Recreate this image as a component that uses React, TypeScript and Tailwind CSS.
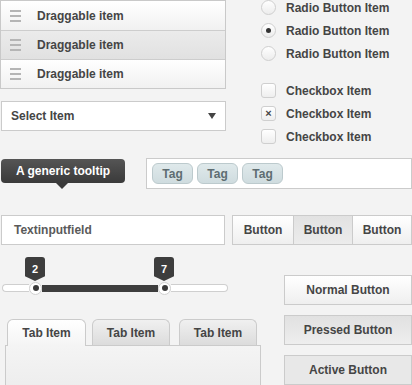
import React from 'react';

const font = { fontFamily: '"Liberation Sans", Arial, sans-serif' };

function Handle() {
  return (
    <div className="flex w-[11px] flex-col gap-[3px]">
      <span className="h-[2px] bg-[#b5b5b5]" />
      <span className="h-[2px] bg-[#b5b5b5]" />
      <span className="h-[2px] bg-[#b5b5b5]" />
    </div>
  );
}

const dragItems = [false, true, false];

function Radio({ checked }: { checked?: boolean }) {
  return (
    <span className="flex h-[15px] w-[15px] items-center justify-center rounded-full border border-[#cfcfcf] bg-gradient-to-b from-[#ffffff] to-[#ececec]">
      {checked && <span className="h-[5px] w-[5px] rounded-full bg-[#333]" />}
    </span>
  );
}

function Check({ checked }: { checked?: boolean }) {
  return (
    <span className="flex h-[15px] w-[15px] items-center justify-center rounded-[3px] border border-[#cfcfcf] bg-gradient-to-b from-[#ffffff] to-[#eeeeee] text-[11px] leading-none text-[#444]">
      {checked && '×'}
    </span>
  );
}

function Bubble({ n }: { n: number }) {
  return (
    <div className="flex h-[24px] w-[20px] items-start justify-center rounded-t-[3px] bg-[#3d3d3d] pt-[4px] text-[11px] font-bold text-white [clip-path:polygon(0_0,100%_0,100%_80%,50%_100%,0_80%)]">
      {n}
    </div>
  );
}

function Knob() {
  return (
    <span className="flex h-[13px] w-[13px] items-center justify-center rounded-full border border-[#d0d0d0] bg-white">
      <span className="h-[6px] w-[6px] rounded-full bg-[#3a3a3a]" />
    </span>
  );
}

export default function App() {
  return (
    <div className="h-[385px] w-[412px] overflow-hidden bg-[#f3f3f3] text-[12px] font-bold text-[#454545]" style={font}>
      {/* row 1 */}
      <div className="flex">
        <div className="w-[226px]">
          <div className="border border-[#c9c9c9]">
            {dragItems.map((dark, i) => (
              <div
                key={i}
                className={
                  'flex h-[29px] items-center gap-[16px] pl-[9px] ' +
                  (i > 0 ? 'border-t border-[#cdcdcd] ' : '') +
                  (dark ? 'bg-gradient-to-b from-[#ebebeb] to-[#e1e1e1]' : 'bg-gradient-to-b from-[#ffffff] to-[#f1f1f1]')
                }
              >
                <Handle />
                <span>Draggable item</span>
              </div>
            ))}
          </div>
          <div className="mt-[12px] ml-[1px] flex h-[30px] items-center justify-between border border-[#cbcbcb] bg-white px-[9px]">
            <span>Select Item</span>
            <span className="h-0 w-0 border-x-[4px] border-t-[6px] border-x-transparent border-t-[#444]" />
          </div>
        </div>
        <div className="ml-[35px] flex flex-col gap-[8px]">
          {[false, true, false].map((c, i) => (
            <div key={i} className="flex h-[15px] items-center gap-[10px]">
              <Radio checked={c} />
              <span>Radio Button Item</span>
            </div>
          ))}
          <div className="h-[6px]" />
          {[false, true, false].map((c, i) => (
            <div key={i} className="flex h-[15px] items-center gap-[10px]">
              <Check checked={c} />
              <span>Checkbox Item</span>
            </div>
          ))}
        </div>
      </div>

      {/* row 2 */}
      <div className="mt-[14px] flex items-start">
        <div className="relative mt-[1px] ml-[1px] flex h-[24px] w-[124px] items-center justify-center rounded-[4px] bg-gradient-to-b from-[#555] to-[#3a3a3a] text-[12px] text-white">
          A generic tooltip
          <span className="absolute top-[24px] left-[55px] h-0 w-0 border-x-[6px] border-t-[6px] border-x-transparent border-t-[#3a3a3a]" />
        </div>
        <div className="ml-[21px] flex h-[31px] flex-1 items-center gap-[4px] border border-[#cbcbcb] bg-white px-[5px]">
          {[0, 1, 2].map((i) => (
            <span
              key={i}
              className="flex h-[21px] w-[41px] items-center justify-center rounded-[6px] border border-[#bccacd] bg-gradient-to-b from-[#dfe9eb] to-[#cfdcdf] text-[#5e6d71]"
            >
              Tag
            </span>
          ))}
        </div>
      </div>

      {/* row 3 */}
      <div className="mt-[26px] flex">
        <div className="ml-[1px] flex h-[30px] w-[224px] items-center border border-[#cbcbcb] bg-white px-[12px] text-[#5a5a5a]">
          Textinputfield
        </div>
        <div className="ml-[7px] flex h-[30px] flex-1 border border-[#cbcbcb]">
          <span className="flex w-[60px] items-center justify-center bg-gradient-to-b from-[#ffffff] to-[#efefef]">Button</span>
          <span className="flex w-[60px] items-center justify-center border-x border-[#cbcbcb] bg-gradient-to-b from-[#e2e2e2] to-[#ececec]">Button</span>
          <span className="flex flex-1 items-center justify-center bg-gradient-to-b from-[#ffffff] to-[#efefef]">Button</span>
        </div>
      </div>

      {/* row 4 */}
      <div className="mt-[12px] flex">
        <div className="w-[262px]">
          <div className="w-[228px] pl-[2px]">
            <div className="flex h-[25px] items-start">
              <div className="ml-[23px]"><Bubble n={2} /></div>
              <div className="ml-[109px]"><Bubble n={7} /></div>
            </div>
            <div className="flex h-[12px] items-center">
              <span className="h-[8px] w-[27px] rounded-l-full border border-r-0 border-[#cfcfcf] bg-white" />
              <Knob />
              <span className="h-[7px] w-[116px] bg-[#3d3d3d]" />
              <Knob />
              <span className="h-[8px] flex-1 rounded-r-full border border-l-0 border-[#cfcfcf] bg-white" />
            </div>
          </div>
          <div className="mt-[25px] ml-[5px] w-[256px]">
            <div className="flex h-[26px] items-end gap-[6px] px-[2px]">
              <span className="relative z-10 -mb-px flex h-[27px] w-[79px] items-center justify-center rounded-t-[6px] border border-b-0 border-[#cbcbcb] bg-gradient-to-b from-[#ffffff] to-[#f4f4f4]">Tab Item</span>
              <span className="flex h-[26px] w-[78px] items-center justify-center rounded-t-[6px] border border-b-0 border-[#cbcbcb] bg-gradient-to-b from-[#f0f0f0] to-[#dcdcdc]">Tab Item</span>
              <span className="ml-[3px] flex h-[26px] w-[78px] items-center justify-center rounded-t-[6px] border border-b-0 border-[#cbcbcb] bg-gradient-to-b from-[#f0f0f0] to-[#dcdcdc]">Tab Item</span>
            </div>
            <div className="h-[45px] border border-[#cbcbcb] bg-gradient-to-b from-[#f4f4f4] to-[#ededed]" />
          </div>
        </div>
        <div className="ml-[22px] flex flex-1 flex-col gap-[10px] pt-[18px]">
          <div className="flex h-[30px] items-center justify-center border border-[#cbcbcb] bg-gradient-to-b from-[#ffffff] to-[#efefef]">Normal Button</div>
          <div className="flex h-[30px] items-center justify-center border border-[#cbcbcb] bg-gradient-to-b from-[#e1e1e1] to-[#eeeeee]">Pressed Button</div>
          <div className="flex h-[30px] items-center justify-center border border-[#cbcbcb] bg-[#e8e8e8]">Active Button</div>
        </div>
      </div>
    </div>
  );
}
